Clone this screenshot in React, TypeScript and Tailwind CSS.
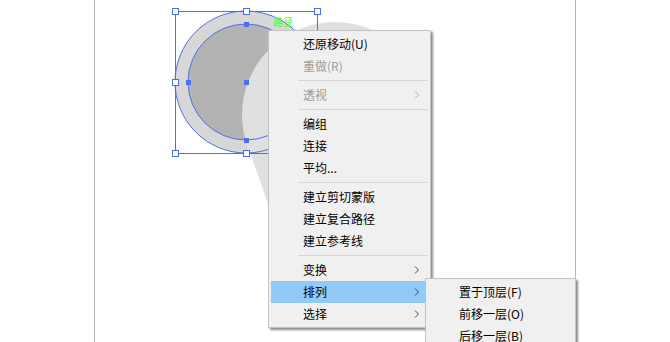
import React from "react";

const BLUE = "#4d6fe8";

type Item =
  | { type: "item"; label: string; disabled?: boolean; arrow?: boolean; active?: boolean }
  | { type: "sep" };

const mainItems: Item[] = [
  { type: "item", label: "还原移动(U)" },
  { type: "item", label: "重做(R)", disabled: true },
  { type: "sep" },
  { type: "item", label: "透视", disabled: true, arrow: true },
  { type: "sep" },
  { type: "item", label: "编组" },
  { type: "item", label: "连接" },
  { type: "item", label: "平均..." },
  { type: "sep" },
  { type: "item", label: "建立剪切蒙版" },
  { type: "item", label: "建立复合路径" },
  { type: "item", label: "建立参考线" },
  { type: "sep" },
  { type: "item", label: "变换", arrow: true },
  { type: "item", label: "排列", arrow: true, active: true },
  { type: "item", label: "选择", arrow: true },
];

const subItems: Item[] = [
  { type: "item", label: "置于顶层(F)" },
  { type: "item", label: "前移一层(O)" },
  { type: "item", label: "后移一层(B)" },
];

function Chevron({ disabled }: { disabled?: boolean }) {
  return (
    <svg width="6" height="8" viewBox="0 0 6 8" className="shrink-0">
      <path
        d="M1 0.5 L4.5 4 L1 7.5"
        fill="none"
        stroke={disabled ? "#b0b0b0" : "#444444"}
        strokeWidth="1"
      />
    </svg>
  );
}

function MenuList({ items, textPad }: { items: Item[]; textPad: string }) {
  return (
    <div className="flex flex-col">
      {items.map((it, i) =>
        it.type === "sep" ? (
          <div key={i} className="h-[7px] flex items-center">
            <div className="ml-[27px] h-px flex-1 bg-[#d5d5d5]" />
          </div>
        ) : (
          <div
            key={i}
            className={
              "h-[22px] flex items-center pr-[8px] " +
              textPad +
              " " +
              (it.active ? "bg-[#91c9f7]" : "")
            }
          >
            <span
              className={
                "flex-1 text-[12px] leading-none whitespace-nowrap " +
                (it.disabled ? "text-[#9c9c9c]" : "text-[#000000]")
              }
            >
              {it.label}
            </span>
            {it.arrow && <Chevron disabled={it.disabled} />}
          </div>
        )
      )}
    </div>
  );
}

function Canvas() {
  const handles: [number, number][] = [
    [175, 11],
    [246, 11],
    [317, 11],
    [175, 82],
    [317, 82],
    [175, 153],
    [246, 153],
    [317, 153],
  ];
  const anchors: [number, number][] = [
    [246, 24],
    [188, 82],
    [246, 82],
    [246, 140],
    [304, 82],
  ];
  return (
    <svg
      width="670"
      height="342"
      viewBox="0 0 670 342"
      className="absolute left-0 top-0"
    >
      <circle cx="246" cy="82" r="71" fill="#d7d7d7" />
      <circle cx="246" cy="82" r="58" fill="#b3b3b3" />
      <circle cx="335" cy="115" r="93" fill="#e0e0e0" />
      <polygon points="298,290 247.6,145.4 335,115 410,160" fill="#e0e0e0" />
      <circle cx="246" cy="82" r="71" fill="none" stroke={BLUE} strokeWidth="1" />
      <circle cx="246" cy="82" r="58" fill="none" stroke={BLUE} strokeWidth="1" />
      <rect x="175.5" y="11.5" width="142" height="142" fill="none" stroke={BLUE} strokeWidth="1" />
      {handles.map(([x, y], i) => (
        <rect
          key={i}
          x={x - 2.5}
          y={y - 2.5}
          width="6"
          height="6"
          fill="#ffffff"
          stroke={BLUE}
          strokeWidth="1"
        />
      ))}
      {anchors.map(([x, y], i) => (
        <rect key={i} x={x - 2} y={y - 2} width="5" height="5" fill={BLUE} />
      ))}
    </svg>
  );
}

export default function App() {
  return (
    <div
      className="relative w-[670px] h-[342px] overflow-hidden bg-white"
      style={{ fontFamily: '"Noto Sans CJK SC", "Noto Sans", sans-serif' }}
    >
      <div className="ml-[94px] w-[482px] h-full border-x border-[#b4b4b4]" />
      <Canvas />
      <span className="absolute left-[273px] top-[17px] text-[10px] leading-none text-[#44ff44]">
        路径
      </span>
      <div className="absolute left-[268px] top-[30px] w-[163px] border border-[#c2c2c2] bg-[#f0f0f0] py-[2px] px-[2px] shadow-[2px_2px_2px_rgba(0,0,0,0.45)]">
        <MenuList items={mainItems} textPad="pl-[32px]" />
      </div>
      <div className="absolute left-[425px] top-[278px] w-[151px] border border-[#c2c2c2] bg-[#f0f0f0] pt-[2px] pb-[8px] px-[2px] shadow-[2px_2px_2px_rgba(0,0,0,0.45)]">
        <MenuList items={subItems} textPad="pl-[31px]" />
      </div>
    </div>
  );
}
